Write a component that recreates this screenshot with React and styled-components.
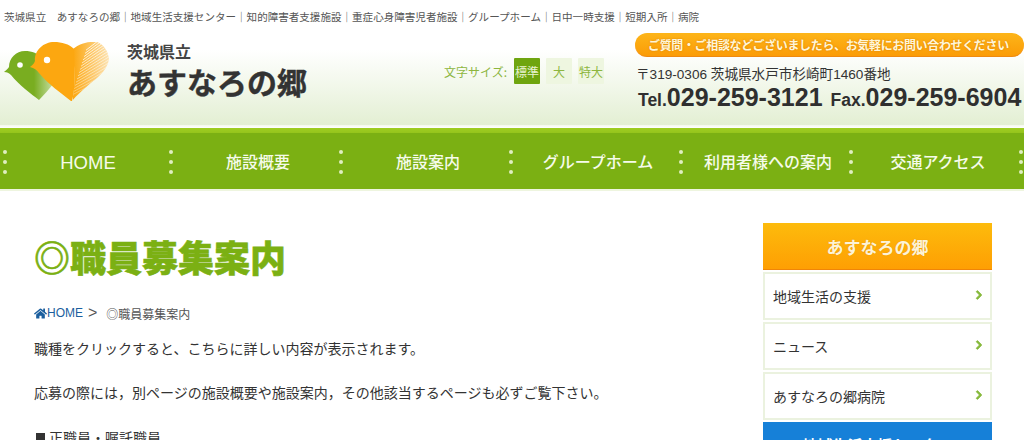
import React from "react";
import styled, { createGlobalStyle } from "styled-components";
import { FaHome, FaChevronRight } from "react-icons/fa";

const Global = createGlobalStyle`
  html, body { margin: 0; padding: 0; background: #fff; overflow: hidden; }
  body { font-family: "Noto Sans CJK JP", "Noto Sans", sans-serif; color: #333; }
  * { box-sizing: border-box; }
`;
const Page = styled.div`width: 1024px; height: 440px; overflow: hidden; background: #fff;`;
const Top = styled.header`
  height: 128px;
  background: linear-gradient(#fff 0, #fff 50px, #e3efd3 125px, #f4f8ec 125px, #fff 128px);
`;
const SiteLine = styled.p`
  margin: 0; padding: 0 0 0 4px; height: 33px; line-height: 34px;
  font-size: 10.56px; color: #555; white-space: nowrap;
`;
const HeaderRow = styled.div`display: flex; align-items: flex-start; height: 95px;`;
const LogoMark = styled.svg`display: block; width: 120px; height: 75px; margin-top: 2px; flex: none;`;
const Brand = styled.div`margin: 8px 0 0 7px; width: 317px; flex: none;`;
const BrandSmall = styled.div`font-size: 16px; line-height: 20px; font-weight: 700; color: #444;`;
const BrandName = styled.div`font-size: 30px; line-height: 36px; font-weight: 700; color: #333; margin-top: 2px; -webkit-text-stroke: 0.4px #333;`;
const SizeControl = styled.div`display: flex; align-items: center; margin-top: 25px; width: 191px; flex: none;`;
const SizeLabel = styled.span`font-size: 12px; color: #8db63f; width: 70px; white-space: nowrap;`;
const SizeBtn = styled.span`
  width: 26px; height: 26px; margin-right: 6px; display: flex; align-items: center; justify-content: center;
  font-size: 12px; color: ${p => (p.$active ? "#e8f3d0" : "#8db63f")};
  background: ${p => (p.$active ? "#6fa50f" : "#eef6e0")};
  border-radius: 1px;
`;
const Contact = styled.div`flex: none; width: 389px;`;
const Pill = styled.div`
  height: 24px; border-radius: 12px; background: linear-gradient(#fdb519, #fb9c07);
  border-bottom: 1px solid #ef8a10;
  color: #fff6d8; font-size: 12px; font-weight: 700; letter-spacing: -0.35px;
  line-height: 23px; padding-left: 13px; white-space: nowrap;
  text-shadow: 0 0 2px #d97d00;
`;
const Address = styled.div`
  margin: 9px 0 0 1px; font-size: 13.6px; line-height: 18px; color: #333; white-space: nowrap;
  font-family: "Liberation Sans", "Noto Sans CJK JP", sans-serif;
`;
const Phones = styled.div`
  margin: -1px 0 0 3px; display: flex; align-items: baseline; white-space: nowrap; color: #2f2f2f;
  font-family: "Liberation Sans", sans-serif; font-weight: 700; line-height: 28px;
`;
const PhoneLabel = styled.span`font-size: 17.5px; margin-left: ${p => p.$gap || 0}px;`;
const PhoneNumber = styled.span`font-size: 25px;`;

const Nav = styled.nav`
  height: 63px; padding: 5px 0 0 3px; display: flex;
  background: linear-gradient(#9fcd22 0, #95c41c 5px, #7bb013 5px, #7bb013 61px, #eef5df 61px);
`;
const NavItem = styled.div`
  position: relative; height: 56px; flex: none; display: flex; align-items: center; justify-content: center;
  width: ${p => (p.$first ? 166 : 170)}px; padding-left: ${p => (p.$first ? 4 : 8)}px;
  padding-top: ${p => (p.$latin ? 3 : 0)}px;
  color: #f6fbea; font-size: ${p => (p.$latin ? 18.5 : 16)}px; font-weight: 500;
  font-family: ${p => (p.$latin ? '"Liberation Sans", sans-serif' : '"Noto Sans CJK JP", sans-serif')};
  &::before, &::after {
    content: ""; position: absolute; left: 0; width: 4px; height: 4px; border-radius: 50%; background: #dfeec0;
  }
  &::before { top: 17px; box-shadow: 0 20px 0 #dfeec0; }
  &::after { top: 27px; }
`;
const NavEnd = styled(NavItem)`width: 4px;`;

const Main = styled.main`display: flex; justify-content: space-between; padding: 32px 32px 0 34px;`;
const Content = styled.section`width: 600px; flex: none;`;
const Title = styled.h1`
  margin: 11px 0 0; font-size: 36px; line-height: 44px; font-weight: 900; color: #7bb013; white-space: nowrap;
  -webkit-text-stroke: 0.6px #7bb013;
`;
const Crumbs = styled.div`margin-top: 25px; display: flex; align-items: center; height: 20px; font-size: 12px; color: #555; white-space: nowrap;`;
const CrumbLink = styled.span`
  display: flex; align-items: center; color: #1c5f9e; font-size: 12px;
  font-family: "Liberation Sans", sans-serif;
  svg { font-size: 13px; }
`;
const CrumbSep = styled.span`margin: 0 9px 0 5px; font-size: 16px; line-height: 20px; font-family: "Liberation Sans", sans-serif; color: #555;`;
const Para = styled.p`
  margin: ${p => p.$top}px 0 0; font-size: 14px; line-height: 24px; color: #333; white-space: nowrap;
`;
const SubHead = styled(Para)`display: flex; align-items: center;`;
const Square = styled.span`width: 9px; height: 9px; background: #333; margin: 0 4px 0 2px;`;

const Side = styled.aside`width: 229px; flex: none; display: flex; flex-direction: column;`;
const SideHead = styled.div`
  height: 47px; display: flex; align-items: center; justify-content: center; padding-bottom: 0;
  background: linear-gradient(#fdbb0c, #fe9f03); border-bottom: 1px solid #f08508;
  color: #fdf3d6; font-size: 17px; font-weight: 700; text-shadow: 0 0 1px #e08a00;
`;
const SideItem = styled.div`
  height: 48px; margin: 2px 0 0; padding: 0 6px 0 8px;
  display: flex; align-items: center; justify-content: space-between;
  border: 2px solid #ebf2df; font-size: 14px; color: #333; background: #fff;
`;
const Chevron = styled(FaChevronRight)`
  color: #85b83a; font-size: 10px; margin: -2px 0 0 0;
  stroke: currentColor; stroke-width: 50;
`;
const BlueHead = styled.div`
  height: 47px; margin-top: 2px; background: #1680d8; color: #fff;
  font-size: 15px; line-height: 22px; font-weight: 700; text-align: center; padding-top: 12px; white-space: nowrap;
`;

const sites = "茨城県立　あすなろの郷｜地域生活支援センター｜知的障害者支援施設｜重症心身障害児者施設｜グループホーム｜日中一時支援｜短期入所｜病院";
const navs = ["施設概要", "施設案内", "グループホーム", "利用者様への案内", "交通アクセス"];
const stripes = Array.from({ length: 15 }, (_, i) => i);

function Logo() {
  return (
    <LogoMark viewBox="0 0 120 75" aria-hidden="true">
      <defs>
        <linearGradient id="fade" x1="0" x2="1" y1="0" y2="0">
          <stop offset="0" stopColor="#fca710" />
          <stop offset="1" stopColor="#fde7bd" />
        </linearGradient>
        <linearGradient id="greenFade" x1="0" x2="1" y1="0" y2="0">
          <stop offset="0.6" stopColor="#79ad20" />
          <stop offset="1" stopColor="#c8dfa8" />
        </linearGradient>
        <clipPath id="lobe">
          <path d="M72 66 C76 52 74 30 73 14 C79 9 88 6 97 7 C103 9 108 15 109 24 C108 33 100 41 92 47 C85 53 77 60 72 66 Z" />
        </clipPath>
      </defs>
      <path d="M39 65 C31 59 19 50 11 40 C9 38 7 37 4 37 C6 35 8 34 9 32 C9 23 16 16 25 16 C32 16 38 18 42 24 L54 48 C49 54 44 60 39 65 Z" fill="url(#greenFade)" />
      <circle cx="20" cy="30" r="2.8" fill="#fff" />
      <rect x="73" y="7" width="38" height="60" fill="url(#fade)" clipPath="url(#lobe)" />
      <g clipPath="url(#lobe)" stroke="#fff" strokeWidth="0.9" fill="none">
        {stripes.map(i => (
          <path key={i} d={`M${72 + i} ${60 - i * 3.2} Q${92 + i} ${50 - i * 3.6} ${112} ${38 - i * 3}`} opacity={0.35 + i * 0.04} />
        ))}
      </g>
      <path d="M71 66 C61 58 48 49 39 38 C37 35 34 33 30 32 C32 30 34 29 35 26 C34 15 44 7 54 7 C62 7 69 9 74 14 C74 30 76 52 72 66 Z" fill="#fca710" />
      <circle cx="47" cy="25" r="3.2" fill="#fff" />
    </LogoMark>
  );
}

export default function App() {
  return (
    <Page>
      <Global />
      <Top>
        <SiteLine>{sites}</SiteLine>
        <HeaderRow>
          <Logo />
          <Brand>
            <BrandSmall>茨城県立</BrandSmall>
            <BrandName>あすなろの郷</BrandName>
          </Brand>
          <SizeControl>
            <SizeLabel>文字サイズ:</SizeLabel>
            <SizeBtn $active>標準</SizeBtn>
            <SizeBtn>大</SizeBtn>
            <SizeBtn>特大</SizeBtn>
          </SizeControl>
          <Contact>
            <Pill>ご質問・ご相談などございましたら、お気軽にお問い合わせください</Pill>
            <Address>〒319-0306 茨城県水戸市杉崎町1460番地</Address>
            <Phones>
              <PhoneLabel>Tel.</PhoneLabel>
              <PhoneNumber>029-259-3121</PhoneNumber>
              <PhoneLabel $gap={8}>Fax.</PhoneLabel>
              <PhoneNumber>029-259-6904</PhoneNumber>
            </Phones>
          </Contact>
        </HeaderRow>
      </Top>
      <Nav>
        <NavItem $first $latin>HOME</NavItem>
        {navs.map(n => <NavItem key={n}>{n}</NavItem>)}
        <NavEnd />
      </Nav>
      <Main>
        <Content>
          <Title>◎職員募集案内</Title>
          <Crumbs>
            <CrumbLink><FaHome />HOME</CrumbLink>
            <CrumbSep>&gt;</CrumbSep>
            ◎職員募集案内
          </Crumbs>
          <Para $top={13}>職種をクリックすると、こちらに詳しい内容が表示されます。</Para>
          <Para $top={20}>応募の際には，別ページの施設概要や施設案内，その他該当するページも必ずご覧下さい。</Para>
          <SubHead $top={21}><Square />正職員・嘱託職員</SubHead>
        </Content>
        <Side>
          <SideHead>あすなろの郷</SideHead>
          <SideItem>地域生活の支援<Chevron /></SideItem>
          <SideItem>ニュース<Chevron /></SideItem>
          <SideItem>あすなろの郷病院<Chevron /></SideItem>
          <BlueHead>地域生活支援センター</BlueHead>
        </Side>
      </Main>
    </Page>
  );
}
